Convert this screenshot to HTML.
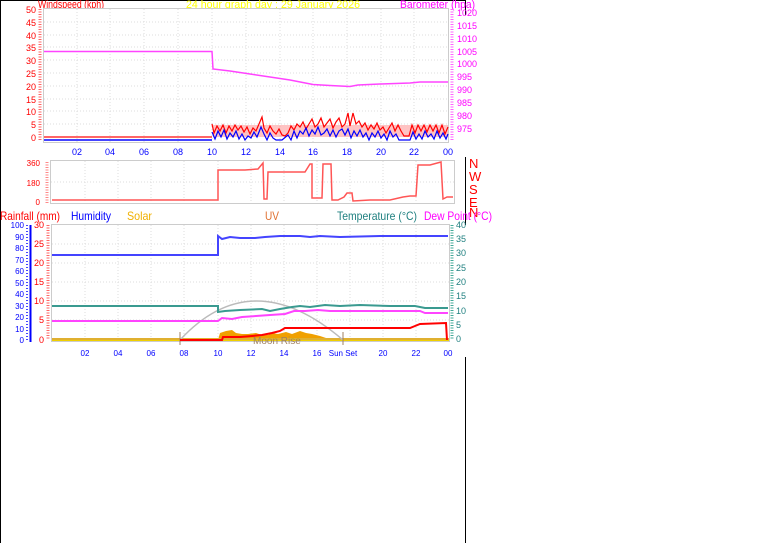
<!DOCTYPE html>
<html><head><meta charset="utf-8"><style>
html,body{margin:0;padding:0;background:#fff;}
svg{display:block;font-family:"Liberation Sans",sans-serif;}
</style></head><body>
<svg width="761" height="543" viewBox="0 0 761 543" xmlns="http://www.w3.org/2000/svg">
<rect width="761" height="543" fill="#fff"/>
<line x1="0.5" y1="0" x2="0.5" y2="543" stroke="#000"/>
<line x1="0" y1="0.5" x2="465" y2="0.5" stroke="#000"/>
<line x1="465.5" y1="0" x2="465.5" y2="15" stroke="#000"/>
<line x1="465.5" y1="157" x2="465.5" y2="225" stroke="#000"/>
<line x1="465.5" y1="357" x2="465.5" y2="543" stroke="#000"/>

<!-- CHART 1 -->
<text x="38" y="8" fill="#f00" font-size="11" textLength="66" lengthAdjust="spacingAndGlyphs">Windspeed (kph)</text>
<text x="186" y="8" fill="#ff0" font-size="11" textLength="174" lengthAdjust="spacingAndGlyphs">24 hour graph day : 29 January 2026</text>
<text x="400" y="8" fill="#f0f" font-size="11" textLength="75" lengthAdjust="spacingAndGlyphs">Barometer (hpa)</text>
<rect x="43.5" y="8.5" width="405" height="134" fill="#fff" stroke="#ccc"/>
<g stroke="#ddd" stroke-dasharray="1,2">
<line x1="77" y1="9" x2="77" y2="142"/><line x1="110" y1="9" x2="110" y2="142"/><line x1="144" y1="9" x2="144" y2="142"/><line x1="178" y1="9" x2="178" y2="142"/><line x1="212" y1="9" x2="212" y2="142"/><line x1="246" y1="9" x2="246" y2="142"/><line x1="280" y1="9" x2="280" y2="142"/><line x1="313" y1="9" x2="313" y2="142"/><line x1="347" y1="9" x2="347" y2="142"/><line x1="381" y1="9" x2="381" y2="142"/><line x1="414" y1="9" x2="414" y2="142"/>
<line x1="44" y1="22" x2="448" y2="22"/><line x1="44" y1="35" x2="448" y2="35"/><line x1="44" y1="47" x2="448" y2="47"/><line x1="44" y1="60" x2="448" y2="60"/><line x1="44" y1="73" x2="448" y2="73"/><line x1="44" y1="86" x2="448" y2="86"/><line x1="44" y1="99" x2="448" y2="99"/><line x1="44" y1="111" x2="448" y2="111"/><line x1="44" y1="124" x2="448" y2="124"/>
</g>
<g fill="#f00" font-size="9" text-anchor="end">
<text x="36" y="13">50</text><text x="36" y="26">45</text><text x="36" y="39">40</text><text x="36" y="51">35</text><text x="36" y="64">30</text><text x="36" y="77">25</text><text x="36" y="90">20</text><text x="36" y="103">15</text><text x="36" y="115">10</text><text x="36" y="128">5</text><text x="36" y="141">0</text>
</g>
<line x1="40" y1="9" x2="40" y2="140" stroke="#f66" stroke-dasharray="1,1.5" stroke-width="3"/>
<line x1="452" y1="9" x2="452" y2="140" stroke="#f6f" stroke-dasharray="1,1.5" stroke-width="3"/>
<g fill="#f0f" font-size="9">
<text x="457" y="16">1020</text><text x="457" y="29">1015</text><text x="457" y="42">1010</text><text x="457" y="55">1005</text><text x="457" y="67">1000</text><text x="457" y="80">995</text><text x="457" y="93">990</text><text x="457" y="106">985</text><text x="457" y="119">980</text><text x="457" y="132">975</text>
</g>
<g fill="#00f" font-size="9" text-anchor="middle">
<text x="77" y="155">02</text><text x="110" y="155">04</text><text x="144" y="155">06</text><text x="178" y="155">08</text><text x="212" y="155">10</text><text x="246" y="155">12</text><text x="280" y="155">14</text><text x="313" y="155">16</text><text x="347" y="155">18</text><text x="381" y="155">20</text><text x="414" y="155">22</text><text x="448" y="155">00</text>
</g>
<polyline fill="none" stroke="#f4f" stroke-width="1.5" points="44,51.5 212,51.5 213,69 230,71 250,74 270,77 290,80 313,84.5 330,85.5 350,86.5 358,85 380,84 410,83 420,82 448,82"/>
<polyline fill="none" stroke="#f66" stroke-width="2" points="44,137 212,137"/>
<polyline fill="none" stroke="#44f" stroke-width="2" points="44,140 212,140"/>
<rect x="213" y="125" width="235" height="12" fill="#f88" opacity="0.5"/>
<polyline fill="none" stroke="#f00" stroke-width="1.2" points="212,124 214,133 217,126 220,131 223,125 226,133 229,126 232,131 235,125 238,130 241,126 244,132 247,127 250,134 253,128 256,131 259,124 262,117 264,128 267,133 270,126 273,131 276,134 279,129 282,135 285,136 288,133 291,126 294,130 297,124 300,127 303,122 306,129 309,124 312,119 315,127 318,124 321,118 324,127 327,123 330,119 333,128 336,122 339,118 342,127 345,124 348,113 350,126 353,113 356,124 359,121 362,127 365,123 368,130 371,125 374,129 377,123 380,130 383,127 386,133 389,128 392,123 395,131 398,125 401,131 404,136 409,136 412,125 415,133 418,125 421,131 424,125 427,132 430,125 433,131 436,125 439,133 442,125 445,134 448,127"/>
<polyline fill="none" stroke="#00f" stroke-width="1.2" points="212,132 215,139 218,131 221,137 224,130 227,139 230,133 233,137 236,131 239,139 242,134 245,140 248,136 251,138 254,132 257,137 261,127 264,134 267,140 270,133 273,138 276,140 282,140 288,135 291,140 294,131 297,138 300,131 303,134 306,128 309,136 312,130 315,134 318,127 321,135 324,133 327,129 330,136 333,130 336,137 339,131 342,129 345,135 348,129 351,138 354,131 357,136 360,130 363,137 366,133 369,140 372,133 375,137 378,131 381,138 384,134 387,140 390,131 393,137 396,134 399,140 404,140 410,140 413,132 416,139 419,134 422,139 425,131 428,137 431,134 434,139 437,131 440,138 443,133 446,139 448,134"/>

<!-- CHART 2 -->
<rect x="50.5" y="160.5" width="404" height="43" fill="#fff" stroke="#ccc"/>
<g stroke="#ddd" stroke-dasharray="1,2">
<line x1="85" y1="161" x2="85" y2="203"/><line x1="118" y1="161" x2="118" y2="203"/><line x1="151" y1="161" x2="151" y2="203"/><line x1="184" y1="161" x2="184" y2="203"/><line x1="218" y1="161" x2="218" y2="203"/><line x1="251" y1="161" x2="251" y2="203"/><line x1="284" y1="161" x2="284" y2="203"/><line x1="317" y1="161" x2="317" y2="203"/><line x1="350" y1="161" x2="350" y2="203"/><line x1="383" y1="161" x2="383" y2="203"/><line x1="416" y1="161" x2="416" y2="203"/>
<line x1="51" y1="182" x2="454" y2="182"/>
</g>
<line x1="47" y1="162" x2="47" y2="203" stroke="#f88" stroke-dasharray="1,1.5" stroke-width="3"/>
<g fill="#f00" font-size="8" text-anchor="end">
<text x="40" y="166">360</text><text x="40" y="186">180</text><text x="40" y="205">0</text>
</g>
<polyline fill="none" stroke="#f55" stroke-width="1.5" points="52,200 218,200 218,170 245,170 258,169 263,163 264,199 267,199 268,172 285,172 305,172 310,164 312,164 312,198 322,198 323,164 331,164 332,200 338,200 344,197 347,193 352,193 353,201 370,200 390,200 403,197 410,196 416,196 418,165 430,165 441,162 443,199 447,197 453,197"/>
<g fill="#f00" font-size="13">
<text x="469" y="168">N</text><text x="469" y="181">W</text><text x="469" y="194">S</text><text x="469" y="207">E</text><text x="469" y="217">N</text>
</g>

<!-- CHART 3 -->
<g font-size="12">
<text x="0" y="220" fill="#f00" textLength="60" lengthAdjust="spacingAndGlyphs">Rainfall (mm)</text>
<text x="71" y="220" fill="#00f" textLength="40" lengthAdjust="spacingAndGlyphs">Humidity</text>
<text x="127" y="220" fill="#f0b000" textLength="25" lengthAdjust="spacingAndGlyphs">Solar</text>
<text x="265" y="220" fill="#e07030" textLength="14" lengthAdjust="spacingAndGlyphs">UV</text>
<text x="337" y="220" fill="#208080" textLength="80" lengthAdjust="spacingAndGlyphs">Temperature (°C)</text>
<text x="424" y="220" fill="#f0f" textLength="68" lengthAdjust="spacingAndGlyphs">Dew Point (°C)</text>
</g>
<rect x="51.5" y="224.5" width="398" height="117" fill="#fff" stroke="#ccc"/>
<g stroke="#ddd" stroke-dasharray="1,2">
<line x1="85" y1="225" x2="85" y2="341"/><line x1="118" y1="225" x2="118" y2="341"/><line x1="151" y1="225" x2="151" y2="341"/><line x1="184" y1="225" x2="184" y2="341"/><line x1="218" y1="225" x2="218" y2="341"/><line x1="251" y1="225" x2="251" y2="341"/><line x1="284" y1="225" x2="284" y2="341"/><line x1="317" y1="225" x2="317" y2="341"/><line x1="350" y1="225" x2="350" y2="341"/><line x1="383" y1="225" x2="383" y2="341"/><line x1="416" y1="225" x2="416" y2="341"/>
<line x1="52" y1="244" x2="449" y2="244"/><line x1="52" y1="263" x2="449" y2="263"/><line x1="52" y1="282" x2="449" y2="282"/><line x1="52" y1="301" x2="449" y2="301"/><line x1="52" y1="320" x2="449" y2="320"/>
</g>
<line x1="30.5" y1="225" x2="30.5" y2="342" stroke="#00f" stroke-width="2"/>
<line x1="27" y1="225" x2="27" y2="340" stroke="#44f" stroke-dasharray="1,2" stroke-width="2"/>
<g fill="#00f" font-size="8" text-anchor="end">
<text x="24" y="228">100</text><text x="24" y="240">90</text><text x="24" y="251">80</text><text x="24" y="263">70</text><text x="24" y="274">60</text><text x="24" y="286">50</text><text x="24" y="297">40</text><text x="24" y="309">30</text><text x="24" y="320">20</text><text x="24" y="332">10</text><text x="24" y="343">0</text>
</g>
<line x1="48" y1="225" x2="48" y2="340" stroke="#f66" stroke-dasharray="1,1.5" stroke-width="3"/>
<g fill="#f00" font-size="9" text-anchor="end">
<text x="44" y="228">30</text><text x="44" y="247">25</text><text x="44" y="266">20</text><text x="44" y="285">15</text><text x="44" y="304">10</text><text x="44" y="323">5</text><text x="44" y="343">0</text>
</g>
<line x1="452" y1="225" x2="452" y2="340" stroke="#4a9" stroke-dasharray="1,1.5" stroke-width="3"/>
<g fill="#208080" font-size="9">
<text x="456" y="228">40</text><text x="456" y="242">35</text><text x="456" y="256">30</text><text x="456" y="271">25</text><text x="456" y="285">20</text><text x="456" y="299">15</text><text x="456" y="314">10</text><text x="456" y="328">5</text><text x="456" y="342">0</text>
</g>
<g fill="#00f" font-size="8" text-anchor="middle">
<text x="85" y="356">02</text><text x="118" y="356">04</text><text x="151" y="356">06</text><text x="184" y="356">08</text><text x="218" y="356">10</text><text x="251" y="356">12</text><text x="284" y="356">14</text><text x="317" y="356">16</text><text x="383" y="356">20</text><text x="416" y="356">22</text><text x="448" y="356">00</text>
<text x="343" y="356">Sun Set</text>
</g>
<!-- solar -->
<path d="M218,340 L220,333 226,331 232,330 236,333 242,334 248,334 256,333 262,335 268,335 272,333 278,334 286,332 292,334 300,331 306,333 312,334 320,336 326,338 335,340 Z" fill="#f0a000"/>
<rect x="52" y="338" width="397" height="3" fill="#f0d000"/>
<line x1="52" y1="339" x2="449" y2="339" stroke="#d09060" stroke-width="1"/>
<path d="M180,340 Q252,262 343,340" fill="none" stroke="#bbb" stroke-width="1.5"/>
<line x1="180" y1="332" x2="180" y2="345" stroke="#a08060"/>
<line x1="343" y1="332" x2="343" y2="345" stroke="#a08060"/>
<text x="253" y="344" fill="#a08060" font-size="10">Moon Rise</text>
<polyline fill="none" stroke="#44f" stroke-width="2" points="52,255 218,255 218,236 222,239 230,237 240,238 255,238 265,237 280,236 300,236 310,237 320,236 340,237 380,236 420,236 448,236"/>
<polyline fill="none" stroke="#3a9a90" stroke-width="2" points="52,306 218,306 218,312 225,311 240,310 262,309 270,311 280,309 292,307 300,306 310,307 325,305 340,306 360,305 390,306 400,306 415,306 425,308 448,308"/>
<polyline fill="none" stroke="#f4f" stroke-width="2" points="52,321 218,321 222,318 232,319 242,317 256,316 270,315 285,314 294,311 305,311 318,310 330,311 360,311 400,311 420,311 425,313 448,313"/>
<polyline fill="none" stroke="#f00" stroke-width="2" points="180,340 222,340 223,337 240,337 252,336 262,335 272,333 280,331 285,328 300,328 410,328 415,326 420,324 446,323 447,340"/>
</svg>
</body></html>
